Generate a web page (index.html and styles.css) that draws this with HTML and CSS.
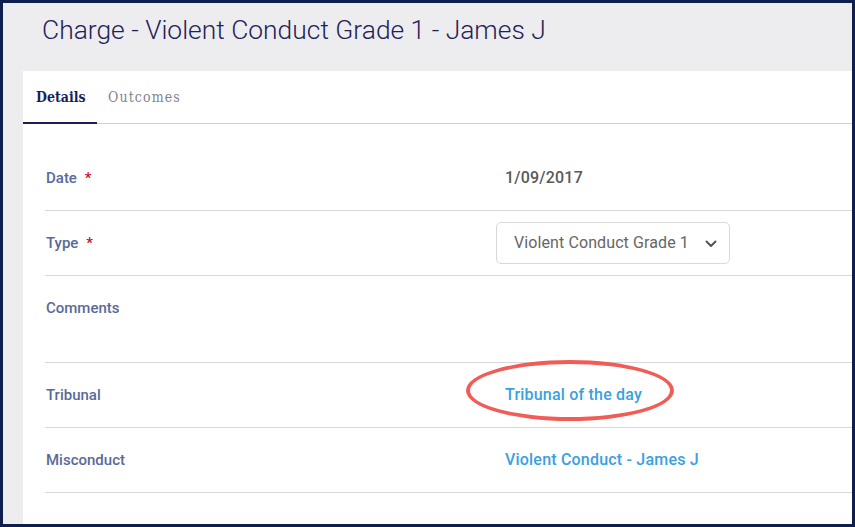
FILE: index.html
```html
<!DOCTYPE html>
<html>
<head>
<meta charset="utf-8">
<link rel="stylesheet" href="styles.css">
</head>
<body>
<div class="frame">
  <h1 class="title">Charge - Violent Conduct Grade 1 - James J</h1>
  <div class="card">
    <div class="tabs">
      <div class="tab active">Details</div>
      <div class="tab">Outcomes</div>
    </div>
    <div class="rows">
      <div class="row">
        <div class="label">Date <span class="req">*</span></div>
        <div class="value plain">1/09/2017</div>
      </div>
      <div class="row select-row">
        <div class="label">Type <span class="req">*</span></div>
        <div class="value">
          <div class="select">
            <span>Violent Conduct Grade 1</span>
            <svg class="chev" width="12" height="8" viewBox="0 0 12 8"><path d="M1.5 1.5 L6 6 L10.5 1.5" fill="none" stroke="#555" stroke-width="2" stroke-linecap="round" stroke-linejoin="round"/></svg>
          </div>
        </div>
      </div>
      <div class="row tall">
        <div class="label">Comments</div>
        <div class="value"></div>
      </div>
      <div class="row">
        <div class="label">Tribunal</div>
        <div class="value circled"><a class="link">Tribunal of the day</a></div>
      </div>
      <div class="row">
        <div class="label">Misconduct</div>
        <div class="value"><a class="link">Violent Conduct - James J</a></div>
      </div>
    </div>
  </div>
</div>
</body>
</html>
```
FILE: styles.css
```css
html, body {
  margin: 0;
  padding: 0;
  height: 100%;
  background: #0e1e4d;
  font-family: Roboto, "Liberation Sans", sans-serif;
  overflow: hidden;
}
.frame {
  position: absolute;
  left: 3px;
  top: 3px;
  right: 3px;
  bottom: 3px;
  background: #ededef;
  display: flex;
  flex-direction: column;
  overflow: hidden;
}
.title {
  margin: 0;
  padding: 12px 0 0 39px;
  height: 56px;
  box-sizing: border-box;
  font-weight: 300;
  font-size: 26.4px;
  color: #1f2258;
  line-height: 30px;
  white-space: nowrap;
}
.card {
  margin: 12px 0 0 20px;
  background: #fff;
  flex: 1;
}
.tabs {
  display: flex;
  border-bottom: 1px solid #cfcfd3;
  height: 53px;
  box-sizing: border-box;
}
.tab {
  font-family: "DejaVu Serif Condensed", "DejaVu Serif", serif;
  font-size: 14px;
  color: #828290;
  padding: 1px 0 0 11px;
  line-height: 50px;
  height: 53px;
  box-sizing: border-box;
  letter-spacing: 1.1px;
}
.tab.active {
  font-weight: bold;
  color: #1c1f55;
  padding: 1px 11px 0 13px;
  width: 74px;
  letter-spacing: 0;
  border-bottom: 2px solid #1c1f55;
}
.rows {
  padding: 22px 0 0 22px;
}
.row {
  display: flex;
  height: 65px;
  border-bottom: 1px solid #d8d8dc;
  box-sizing: border-box;
  align-items: flex-start;
  padding-top: 23px;
}
.row.tall {
  height: 87px;
}
.label {
  width: 459px;
  flex: none;
  padding-left: 1px;
  font-size: 15px;
  font-weight: 500;
  color: #5a6a98;
  line-height: 18px;
}
.req {
  color: #d0102a;
  margin-left: 4px;
}
.value {
  font-size: 16px;
  font-weight: 500;
  letter-spacing: 0.2px;
  line-height: 18px;
}
.value.plain {
  color: #595959;
}
.select-row {
  padding-top: 11px;
}
.select-row .label {
  padding-top: 12px;
}
.select {
  margin-left: -9px;
  width: 234px;
  height: 42px;
  box-sizing: border-box;
  border: 1px solid #d9d9dd;
  border-radius: 5px;
  display: flex;
  align-items: center;
  padding: 0 12px 0 17px;
  justify-content: space-between;
  font-weight: 400;
  color: #666;
  font-size: 16px;
  letter-spacing: 0.1px;
}
.chev {
  margin-top: 1px;
}
.link {
  color: #3aa0e2;
  text-decoration: none;
}
.circled {
  position: relative;
}
.circled::after {
  content: "";
  position: absolute;
  box-sizing: border-box;
  left: -39px;
  top: -26px;
  width: 208px;
  height: 61px;
  border: 4px solid #f25c57;
  border-radius: 50%;
}
```
